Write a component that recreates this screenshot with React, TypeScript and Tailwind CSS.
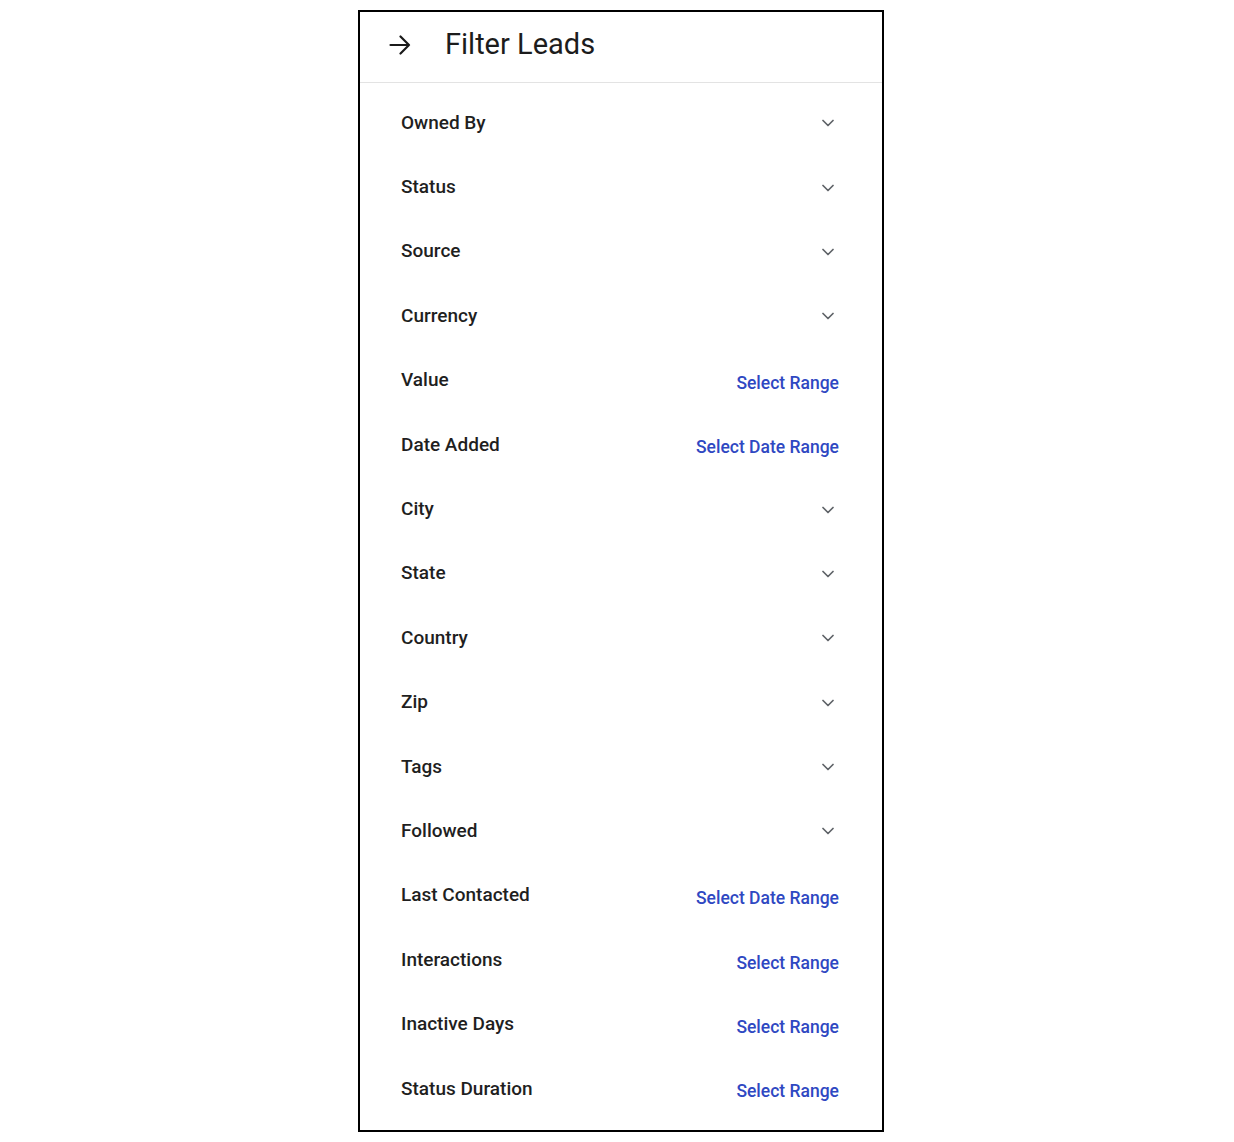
import React from "react";

type Row = { label: string; action?: string };

const rows: Row[] = [
  { label: "Owned By" },
  { label: "Status" },
  { label: "Source" },
  { label: "Currency" },
  { label: "Value", action: "Select Range" },
  { label: "Date Added", action: "Select Date Range" },
  { label: "City" },
  { label: "State" },
  { label: "Country" },
  { label: "Zip" },
  { label: "Tags" },
  { label: "Followed" },
  { label: "Last Contacted", action: "Select Date Range" },
  { label: "Interactions", action: "Select Range" },
  { label: "Inactive Days", action: "Select Range" },
  { label: "Status Duration", action: "Select Range" },
];

function Chevron() {
  return (
    <svg width="12" height="8" viewBox="0 0 12 8" fill="none" className="mr-[5px] mt-[2px]">
      <path d="M1 1.5L6 6.5L11 1.5" stroke="#5f6368" strokeWidth="1.7" strokeLinecap="round" strokeLinejoin="round" />
    </svg>
  );
}

function Arrow() {
  return (
    <svg width="22" height="20" viewBox="0 0 22 20" fill="none">
      <path d="M1.5 10H20M11.5 1.5L20 10L11.5 18.5" stroke="#1a1a1a" strokeWidth="2.2" strokeLinecap="round" strokeLinejoin="round" />
    </svg>
  );
}

export default function App() {
  return (
    <div className="w-[1234px] h-[1142px] bg-white flex pl-[358px] pt-[10px]" style={{ fontFamily: "Roboto, 'Liberation Sans', sans-serif" }}>
      <div className="w-[526px] h-[1122px] border-2 border-black flex flex-col">
        <div className="h-[71px] flex items-center border-b border-[#e3e3e3] pl-[29px] pb-[5px] shrink-0">
          <Arrow />
          <span className="ml-[34px] text-[29px] text-[#1c1c1c] leading-none">Filter Leads</span>
        </div>
        <div className="flex flex-col pt-[7px] pl-[41px] pr-[43px]">
          {rows.map((r) => (
            <div key={r.label} className="h-[64.4px] flex items-center justify-between">
              <span className="text-[19px] font-medium text-[#1f1f1f] leading-none">{r.label}</span>
              {r.action ? (
                <span className="text-[17.5px] font-medium text-[#2f48c2] leading-none mt-[8px]">{r.action}</span>
              ) : (
                <Chevron />
              )}
            </div>
          ))}
        </div>
      </div>
    </div>
  );
}
